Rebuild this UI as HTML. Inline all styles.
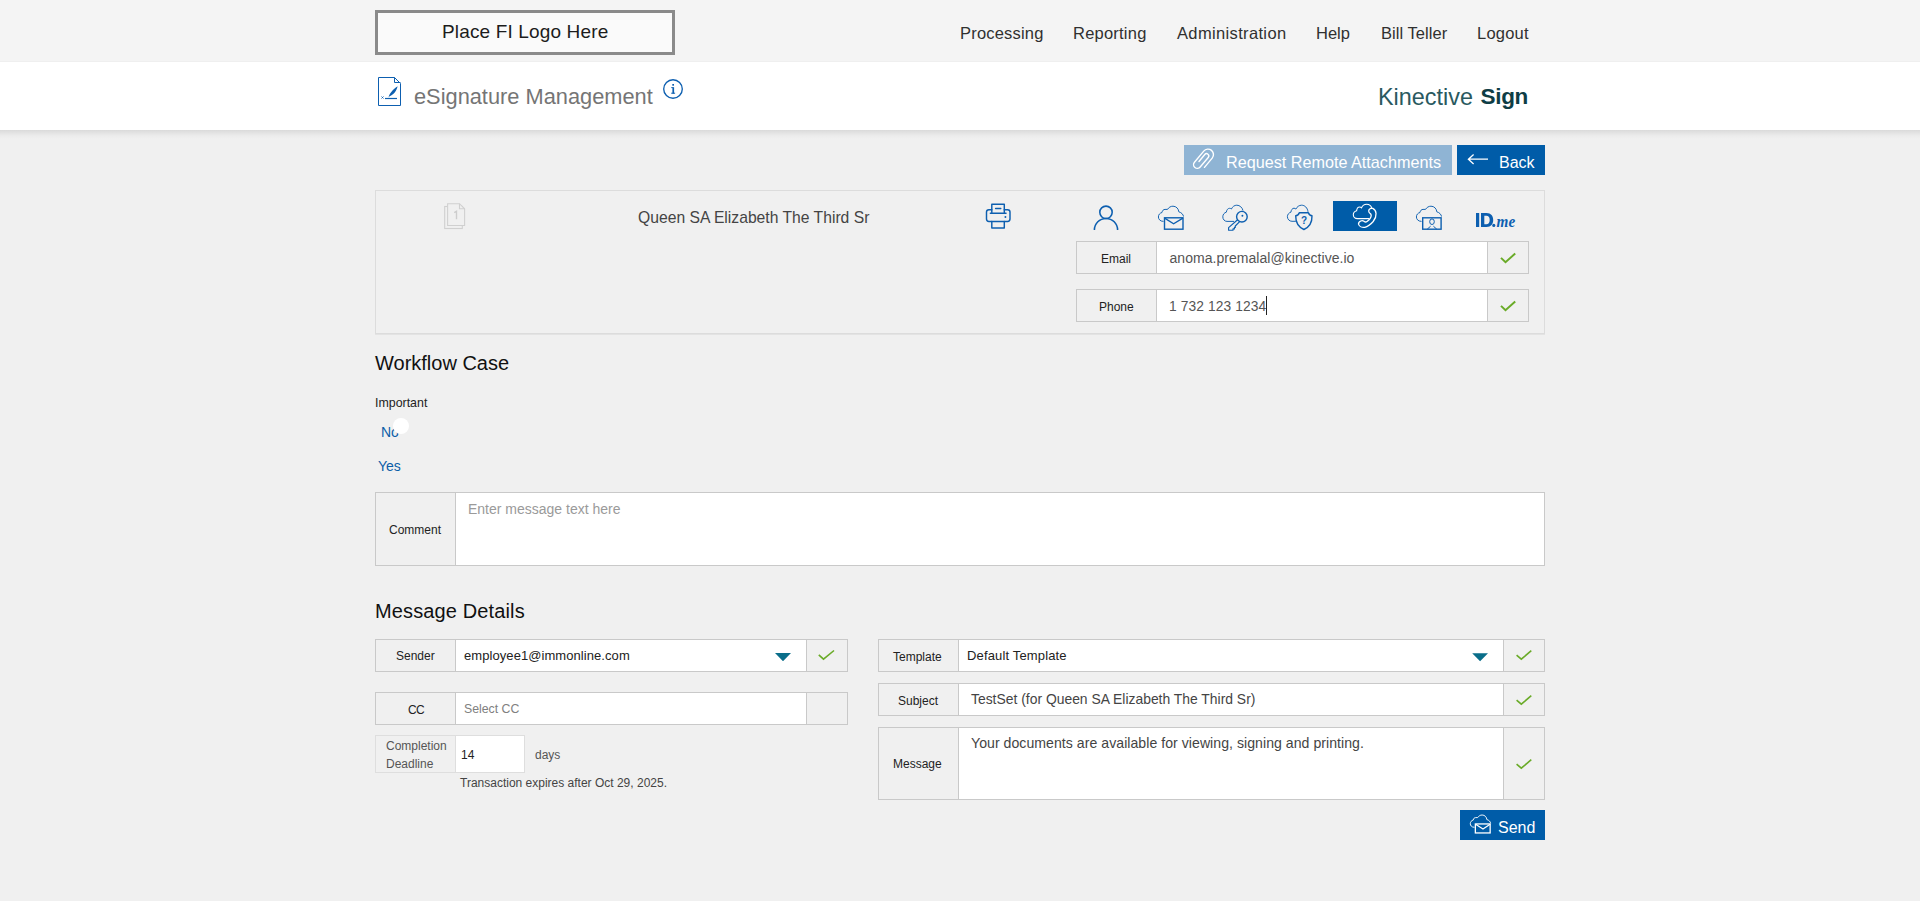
<!DOCTYPE html>
<html><head><meta charset="utf-8">
<style>
*{margin:0;padding:0;box-sizing:border-box}
html,body{width:1920px;height:901px;overflow:hidden}
body{background:#f0f0f0;font-family:"Liberation Sans",sans-serif;position:relative}
.a{position:absolute}
.t{position:absolute;white-space:pre;line-height:1}
#hdr{left:0;top:0;width:1920px;height:62px;background:#f4f4f4}
#band{left:0;top:62px;width:1920px;height:68px;background:#fff}
#shd{left:0;top:130px;width:1920px;height:9px;background:linear-gradient(#dadada,#e4e4e4 35%,#ececec 65%,#f0f0f0)}
#shd2{left:0;top:61px;width:1920px;height:1px;background:#efefef}
#logo{left:375px;top:10px;width:300px;height:45px;border:3px solid #8a8a8a;background:#fafafa}
.nav{color:#303030;font-size:16.5px}
.btn{position:absolute;background:#005ca8}
.box{position:absolute;border:1px solid #c9c9c9;background:#f0f0f0}
.inp{position:absolute;background:#fff;border-left:1px solid #c9c9c9;border-right:1px solid #c9c9c9;top:0;bottom:0}
.lbl{color:#222;font-size:12px}
svg{position:absolute;overflow:visible}
</style></head><body>
<div id="hdr" class="a"></div>
<div id="logo" class="a"></div>
<div class="t" style="left:442px;top:22px;font-size:19px;color:#1c1c1c;letter-spacing:.15px">Place FI Logo Here</div>
<div class="t nav" style="left:960px;top:25px;letter-spacing:.2px">Processing</div>
<div class="t nav" style="left:1073px;top:25px;letter-spacing:.22px">Reporting</div>
<div class="t nav" style="left:1177px;top:25px;letter-spacing:.35px">Administration</div>
<div class="t nav" style="left:1316px;top:25px">Help</div>
<div class="t nav" style="left:1381px;top:25px;letter-spacing:.05px">Bill Teller</div>
<div class="t nav" style="left:1477px;top:25px;letter-spacing:.2px">Logout</div>

<div id="band" class="a"></div><div id="shd" class="a"></div><div id="shd2" class="a"></div>
<!-- doc icon -->
<svg style="left:0;top:0" width="1920" height="901" viewBox="0 0 1920 901">
 <g fill="none" stroke="#0d5fb0" stroke-width="1">
  <path d="M378.5,77.5 H394.5 L400.5,83.5 V105.5 H378.5 Z"/>
  <path d="M394.5,77.5 V82.5 H400.5"/>
  <path d="M385,98.5 H397" stroke-width="1.2"/>
  <path d="M381.5,96.5 l2,2 M383.5,96.5 l-2,2" stroke-width="0.9"/>
 </g>
 <path d="M388.5,97.6 C389.5,94 391.5,90.5 397.6,86.3 C396.8,90.5 394,94.5 389.6,96.2 Z" fill="#0d5fb0"/>
 <!-- info icon -->
 <circle cx="673" cy="89" r="9.3" fill="none" stroke="#0d5fb0" stroke-width="1.35"/>
</svg>
<div class="t" style="left:414px;top:86px;font-size:21.8px;color:#757575">eSignature Management</div>
<div class="t" style="left:1378px;top:86px;font-size:23.4px;color:#2a5960">Kinective</div>
<div class="t" style="left:1480.5px;top:86px;font-size:22.5px;color:#0e3d45;font-weight:bold;letter-spacing:-.3px">Sign</div>

<!-- buttons -->
<div class="btn" style="left:1184px;top:145px;width:268px;height:30px;background:#8fb4d4"></div>
<div class="t" style="left:1226px;top:154px;font-size:16.2px;color:#fff">Request Remote Attachments</div>
<div class="btn" style="left:1457px;top:145px;width:88px;height:30px"></div>
<div class="t" style="left:1499px;top:155px;font-size:16px;color:#fff">Back</div>

<!-- signer panel -->
<div class="box" style="left:375px;top:190px;width:1170px;height:144px;border-color:#dcdcdc;box-shadow:0 1px 0 #e3e3e3"></div>
<div class="t" style="left:638px;top:210px;font-size:15.7px;color:#444">Queen SA Elizabeth The Third Sr</div>

<div class="box" style="left:1076px;top:241px;width:453px;height:33px"><div class="inp" style="left:79px;width:332px"></div></div>
<div class="t lbl" style="left:1101px;top:253px">Email</div>
<div class="t" style="left:1169.5px;top:251px;font-size:14px;color:#555;letter-spacing:.04px">anoma.premalal@kinective.io</div>
<div class="box" style="left:1076px;top:289px;width:453px;height:33px"><div class="inp" style="left:79px;width:332px"></div></div>
<div class="t lbl" style="left:1099px;top:301px">Phone</div>
<div class="t" style="left:1169px;top:300px;font-size:13.8px;color:#555;letter-spacing:.1px">1 732 123 1234</div>
<div class="a" style="left:1266px;top:296px;width:1px;height:19px;background:#222"></div>

<div class="a" style="left:1333px;top:201px;width:64px;height:30px;background:#005ca8"></div>

<!-- workflow -->
<div class="t" style="left:375px;top:353px;font-size:20px;color:#111">Workflow Case</div>
<div class="t" style="left:375px;top:397px;font-size:12.4px;color:#222">Important</div>
<div class="t" style="left:381px;top:425px;font-size:14px;color:#0b5ea8">No</div>
<div class="a" style="left:393px;top:418px;width:16px;height:16px;border-radius:50%;background:#fff"></div>
<div class="t" style="left:378px;top:459px;font-size:14px;color:#0b5ea8">Yes</div>

<div class="box" style="left:375px;top:492px;width:1170px;height:74px"><div class="inp" style="left:79px;right:0;width:auto;border-right:0"></div></div>
<div class="t lbl" style="left:389px;top:524px">Comment</div>
<div class="t" style="left:468px;top:502px;font-size:14px;color:#9a9a9a">Enter message text here</div>

<!-- message details -->
<div class="t" style="left:375px;top:601px;font-size:20px;color:#111;letter-spacing:.13px">Message Details</div>
<div class="box" style="left:375px;top:639px;width:473px;height:33px"><div class="inp" style="left:79px;width:352px"></div></div>
<div class="t lbl" style="left:396px;top:650px">Sender</div>
<div class="t" style="left:464px;top:649px;font-size:13px;color:#222;letter-spacing:.07px">employee1@immonline.com</div>
<div class="box" style="left:375px;top:692px;width:473px;height:33px"><div class="inp" style="left:79px;width:352px"></div></div>
<div class="t lbl" style="left:408px;top:704px;letter-spacing:-.6px;font-size:12px">CC</div>
<div class="t" style="left:464px;top:703px;font-size:12.3px;color:#808080">Select CC</div>
<div class="box" style="left:375px;top:735px;width:150px;height:38px;border-color:#dedede"><div class="inp" style="left:79px;width:69px;border-color:#dedede;border-right:0"></div></div>
<div class="t" style="left:386px;top:737px;font-size:12px;color:#555;line-height:18px">Completion<br>Deadline</div>
<div class="t" style="left:461px;top:749px;font-size:12px;color:#222">14</div>
<div class="t" style="left:535px;top:749px;font-size:12px;color:#555">days</div>
<div class="t" style="left:460px;top:777px;font-size:12px;color:#444">Transaction expires after Oct 29, 2025.</div>

<div class="box" style="left:878px;top:639px;width:667px;height:33px"><div class="inp" style="left:79px;width:546px"></div></div>
<div class="t lbl" style="left:893px;top:651px">Template</div>
<div class="t" style="left:967px;top:649px;font-size:13px;color:#222;letter-spacing:.15px">Default Template</div>
<div class="box" style="left:878px;top:683px;width:667px;height:33px"><div class="inp" style="left:79px;width:546px"></div></div>
<div class="t lbl" style="left:898px;top:695px">Subject</div>
<div class="t" style="left:971px;top:693px;font-size:13.9px;color:#444">TestSet (for Queen SA Elizabeth The Third Sr)</div>
<div class="box" style="left:878px;top:727px;width:667px;height:73px"><div class="inp" style="left:79px;width:546px"></div></div>
<div class="t lbl" style="left:893px;top:758px">Message</div>
<div class="t" style="left:971px;top:736px;font-size:14.1px;color:#444;letter-spacing:.04px">Your documents are available for viewing, signing and printing.</div>

<div class="btn" style="left:1460px;top:810px;width:85px;height:30px"></div>
<div class="t" style="left:1498px;top:820px;font-size:16px;color:#fff">Send</div>

<!-- icons overlay -->
<svg id="icons" style="left:0;top:0" width="1920" height="901" viewBox="0 0 1920 901">
 <!-- info i -->
 <g fill="#0d5fb0">
  <rect x="672.3" y="84" width="1.7" height="1.7"/>
  <rect x="672.4" y="87.2" width="1.7" height="6.4"/>
  <rect x="671.2" y="87.2" width="2" height="0.9"/>
  <rect x="671.2" y="92.7" width="3.9" height="1"/>
 </g>
 <!-- paperclip -->
 <g transform="translate(1203.8,159.6) rotate(40) translate(-5.5,-12)" fill="none" stroke="#fff" stroke-width="1.4" stroke-linecap="round">
  <path d="M11,17.5 V5.5 A5.5,5.5 0 0 0 0,5.5 V20 A3.75,3.75 0 0 0 7.5,20 V7.5 A2.25,2.25 0 0 0 3,7.5 V16.5"/>
 </g>
 <!-- back arrow -->
 <path d="M1488,159.2 H1468.5 M1473.6,154.4 L1468.4,159.2 L1473.6,164" fill="none" stroke="#fff" stroke-width="1.3"/>
 <!-- page icon grey -->
 <g fill="#f0f0f0" stroke="#d0d0d0" stroke-width="1.1">
  <rect x="444.7" y="206.5" width="17.6" height="22"/>
  <path d="M447.6,203.7 H459.5 L464.6,208.8 V225.5 H447.6 Z"/>
  <path d="M459.5,203.7 V208.8 H464.6" fill="none"/>
 </g>
 <path d="M454.2,212.6 L456.5,211.3 V219.2" fill="none" stroke="#cdcdcd" stroke-width="1.4"/>
 <!-- printer -->
 <g fill="none" stroke="#0d5fb0" stroke-width="1.45" stroke-linecap="round" stroke-linejoin="round">
  <path d="M991.8,212.6 V204.3 H1004.3 V212.6"/>
  <path d="M995.6,208.4 H1000.8"/>
  <path d="M991.8,209.7 H988.9 Q986.5,209.7 986.5,212.1 V219 Q986.5,221.4 988.9,221.4 H1007.6 Q1010,221.4 1010,219 V212.1 Q1010,209.7 1007.6,209.7 H1004.3"/>
  <path d="M990.4,213.2 H1006" stroke-width="1.5"/>
  <path d="M991.8,221.4 V228 H1004.3 V221.4"/>
 </g>
 <circle cx="1005.4" cy="217" r="0.95" fill="#0d5fb0"/>
 <!-- person -->
 <g fill="none" stroke="#0d5fb0" stroke-width="1.55">
  <circle cx="1106" cy="212.3" r="6.2"/>
  <path d="M1094.4,230 A11.6,11.6 0 0 1 1117.6,230"/>
 </g>
 <!-- mail cloud -->
 <g fill="none" stroke="#0d5fb0">
  <path transform="translate(1158.4,206.2)" stroke-width="0.95" d="M5.1,15.2 C1.6,15.2 0,12.8 0,10.8 C0,8.3 1.6,6.8 3.6,6.3 C3.9,4.3 5.1,3.2 6.6,3.2 L9.1,3.2 C10.4,1.1 12.4,0 14.6,0 C17.9,0 20.2,2.6 20.4,5.6 C23.1,6.4 24.9,8.3 25.1,10.3"/>
  <rect x="1164.5" y="217.8" width="18.5" height="11.4" stroke-width="1.4"/>
  <path d="M1164.6,218.1 L1173.6,223.8 L1182.9,218.1" stroke-width="1.3"/>
 </g>
 <!-- key cloud -->
 <g fill="none" stroke="#0d5fb0">
  <path stroke-width="0.95" d="M1234,221.4 L1227,221.4 C1224.5,221.4 1222.8,219.2 1222.8,216.8 C1222.8,214.5 1224.3,212.7 1226.3,212.2 C1226.6,210 1227.8,208.3 1229.6,208.3 C1230.4,208.3 1231,208.6 1231.4,209 C1232.5,206.6 1234.5,205.2 1236.8,205.2 C1239.8,205.2 1242.3,207.5 1243,210.6"/>
  <circle cx="1241.9" cy="216.7" r="5.3" stroke-width="1.4"/>
  <path stroke-width="1.15" stroke-linejoin="round" d="M1237.6,219.7 L1228.6,227.6 V230.2 H1233 V228.9 H1234.4 V227.4 H1235.3 V226 L1239.6,221.6"/>
 </g>
 <circle cx="1242.4" cy="215.8" r="0.95" fill="#0d5fb0"/>
 <!-- shield cloud -->
 <g fill="none" stroke="#0d5fb0">
  <path stroke-width="0.95" d="M1295.8,221.3 L1292,221.3 C1289.4,221.3 1287.4,219.2 1287.4,216.7 C1287.4,214.5 1288.9,212.7 1290.9,212.2 C1291.2,210 1292.3,208.2 1294,208.2 C1294.8,208.2 1295.5,208.6 1295.9,209.1 C1297,206.7 1299.2,205.2 1301.6,205.2 C1304.8,205.2 1307.5,207.8 1308,211.8"/>
  <path stroke-width="1.4" stroke-linejoin="round" d="M1299.3,212.7 L1308.4,212.7 C1309,214.6 1310.5,215.6 1312,215.7 C1312.2,222 1309.5,226.9 1303.9,229.5 C1298.3,226.9 1295.6,222 1295.7,215.7 C1297.2,215.6 1298.7,214.6 1299.3,212.7 Z"/>
 </g>
 <text x="1304" y="223.6" text-anchor="middle" font-family="Liberation Sans" font-weight="bold" font-size="10" fill="#0d5fb0">?</text>
 <!-- phone cloud white -->
 <g fill="none" stroke="#fff">
  <path stroke-width="1.1" d="M1369.5,218.6 L1357.5,218.6 C1355.1,218.6 1353.3,216.9 1353.3,214.8 C1353.3,212.6 1354.8,211.3 1356.6,210.8 C1356.9,208.5 1358,207 1359.6,207 C1360.3,207 1361,207.3 1361.5,207.8 C1362.5,205.5 1364.5,204.3 1366.6,204.3 C1369.2,204.3 1371.3,206.2 1371.8,208.5"/>
  <path stroke-width="1.3" stroke-linejoin="round" d="M1370,208.8 C1370.8,208.2 1371.8,208.1 1372.8,208.4 C1376.5,210.2 1377.6,216 1373.2,221.5 C1370.5,224.6 1367.5,226.8 1364.8,227.4 C1362,227.8 1359.3,226.3 1358.6,224.4 C1358.3,223.2 1359.2,221.8 1360.7,221 C1361.8,220.4 1363,220.5 1364,221.3 C1365,222.1 1366.1,222.2 1367,221.5 C1369.5,219.8 1371.2,217.5 1371.2,215.3 C1371.2,214.3 1370.5,213.6 1369.7,213 C1368.3,211.9 1368.4,209.8 1370,208.8 Z"/>
 </g>
 <!-- screen cloud -->
 <g fill="none" stroke="#0d5fb0">
  <path transform="translate(1416.4,206.2)" stroke-width="0.95" d="M5.1,15.2 C1.6,15.2 0,12.8 0,10.8 C0,8.3 1.6,6.8 3.6,6.3 C3.9,4.3 5.1,3.2 6.6,3.2 L9.1,3.2 C10.4,1.1 12.4,0 14.6,0 C17.9,0 20.2,2.6 20.4,5.6 C23.1,6.4 24.9,8.3 25.1,10.3"/>
  <rect x="1422.7" y="217.8" width="18.4" height="11.4" stroke-width="1.4"/>
  <ellipse cx="1432" cy="221.7" rx="2.3" ry="2.8" stroke-width="1"/>
  <path d="M1427.2,229.2 L1430.6,226.2 M1433.4,226.2 L1436.8,229.2" stroke-width="1"/>
 </g>
 <!-- ID.me -->
 <g fill="#0d5fb0">
  <rect x="1476" y="213" width="3.2" height="14"/>
  <path fill-rule="evenodd" d="M1481,213 H1486.5 C1491,213 1493.2,216 1493.2,220 C1493.2,224 1491,227 1486.5,227 H1481 Z M1484.3,215.8 V224.2 H1486.3 C1488.4,224.2 1489.7,222.8 1489.7,220 C1489.7,217.2 1488.4,215.8 1486.3,215.8 Z"/>
  <circle cx="1493.8" cy="225.4" r="1.55"/>
 </g>
 <text x="1496.6" y="227" font-family="Liberation Serif" font-style="italic" font-weight="bold" font-size="16.5" textLength="18.6" lengthAdjust="spacingAndGlyphs" fill="#0d5fb0">me</text>
 <!-- checks -->
 <g fill="none" stroke="#6aab28" stroke-width="2">
  <path d="M1501,257.9 L1505.5,262.2 L1515.2,253.6"/>
  <path d="M1501,305.9 L1505.5,310.2 L1515.2,301.6"/>
 </g>
 <g fill="none" stroke="#6aab28" stroke-width="1.6">
  <path d="M818.8,654.8 L823.5,659.2 L834,650.5"/>
  <path d="M1516.6,655.2 L1521.3,659.2 L1531.3,650.7"/>
  <path d="M1516.6,700.2 L1521.3,704.2 L1531.3,695.7"/>
  <path d="M1516.6,764.2 L1521.3,768.2 L1531.3,759.7"/>
 </g>
 <!-- dropdown triangles -->
 <path d="M775,653 H791 L783,661.3 Z M1472.2,653.2 H1488 L1480.1,661.3 Z" fill="#0a6e8a"/>
 <!-- send icon -->
 <g fill="none" stroke="#fff">
  <path transform="translate(1470.3,815) scale(0.81)" stroke-width="1.15" d="M5.1,15.2 C1.6,15.2 0,12.8 0,10.8 C0,8.3 1.6,6.8 3.6,6.3 C3.9,4.3 5.1,3.2 6.6,3.2 L9.1,3.2 C10.4,1.1 12.4,0 14.6,0 C17.9,0 20.2,2.6 20.4,5.6 C23.1,6.4 24.9,8.3 25.1,10.3"/>
  <rect x="1475.35" y="823.95" width="14.8" height="9" stroke-width="1.3"/>
  <path d="M1475.6,824.3 L1483,829.1 L1490.1,824.3" stroke-width="1.2"/>
 </g>
</svg>
</body></html>
